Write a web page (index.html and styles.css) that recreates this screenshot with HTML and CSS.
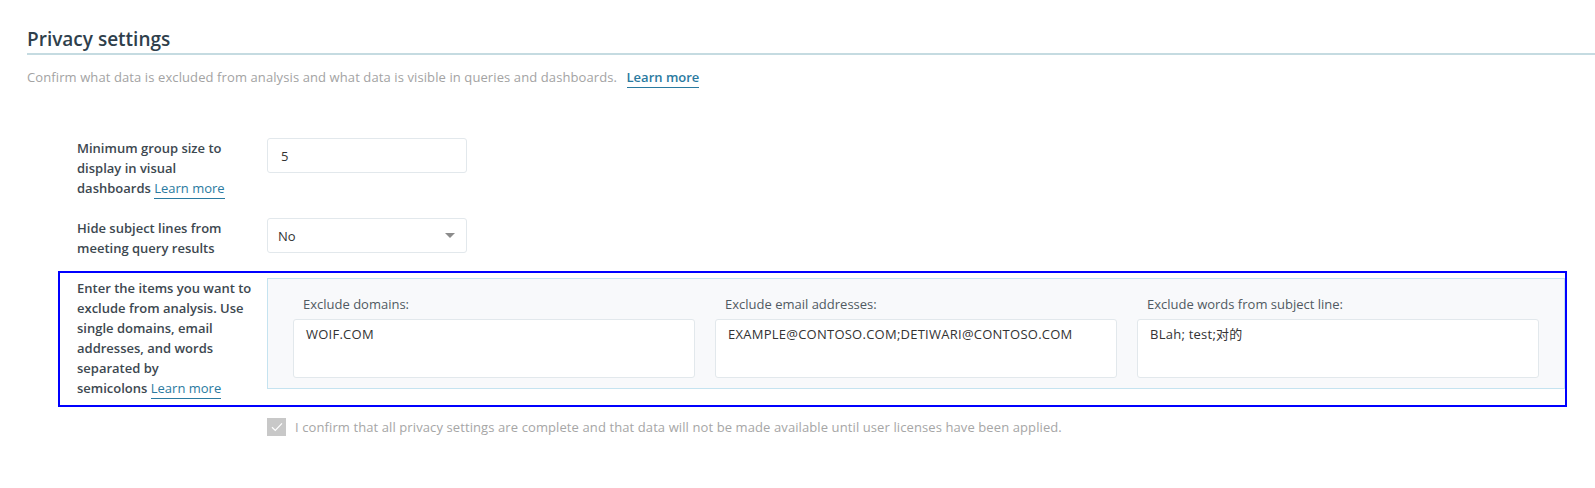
FILE: index.html
```html
<!DOCTYPE html>
<html lang="en">
<head>
<meta charset="utf-8">
<title>Privacy settings</title>
<link rel="stylesheet" href="styles.css">
</head>
<body>
<div class="page">
  <h1 class="title">Privacy settings</h1>
  <p class="subtitle">Confirm what data is excluded from analysis and what data is visible in queries and dashboards. <a class="link" href="#">Learn more</a></p>

  <div class="form">
    <div class="row row-one">
      <div class="label">Minimum group size to<br>display in visual<br>dashboards <a class="link" href="#">Learn more</a></div>
      <div class="input">5</div>
    </div>
    <div class="row row-two">
      <div class="label">Hide subject lines from<br>meeting query results</div>
      <div class="input select">No<span class="caret"></span></div>
    </div>
    <div class="row row-exclude">
      <div class="label">Enter the items you want to<br>exclude from analysis. Use<br>single domains, email<br>addresses, and words<br>separated by<br>semicolons <a class="link" href="#">Learn more</a></div>
      <div class="panel">
        <div class="field">
          <div class="field-label">Exclude domains:</div>
          <div class="area">WOIF.COM</div>
        </div>
        <div class="field">
          <div class="field-label">Exclude email addresses:</div>
          <div class="area">EXAMPLE@CONTOSO.COM;DETIWARI@CONTOSO.COM</div>
        </div>
        <div class="field">
          <div class="field-label">Exclude words from subject line:</div>
          <div class="area">BLah; test;对的</div>
        </div>
      </div>
    </div>
    <div class="confirm">
      <span class="check"><svg width="12" height="10" viewBox="0 0 12 10"><path d="M1 5.2 L4.3 8.4 L11 1.4" fill="none" stroke="#ffffff" stroke-width="1.2"/></svg></span>
      <span class="confirm-text">I confirm that all privacy settings are complete and that data will not be made available until user licenses have been applied.</span>
    </div>
  </div>
</div>
</body>
</html>
```

FILE: styles.css
```css
html, body {
  margin: 0;
  padding: 0;
  background: #ffffff;
}

body {
  font-family: "Open Sans", "Noto Sans CJK SC", sans-serif;
  font-size: 13px;
  color: #333333;
}

.page {
  padding: 25px 0 0 27px;
}

.title {
  margin: 0;
  font-size: 19px;
  font-weight: 600;
  line-height: 28px;
  color: #2f3f4c;
  border-bottom: 2px solid #c5dbe1;
}

.subtitle {
  margin: 12px 0 0;
  font-size: 13px;
  letter-spacing: 0.1px;
  line-height: 20px;
  color: #a3a3a3;
}

.link {
  color: #2a7aa0;
  text-decoration: none;
  border-bottom: 1px solid #2a7aa0;
  padding-bottom: 1px;
}

.subtitle .link {
  margin-left: 6px;
  font-weight: 600;
  letter-spacing: 0;
}

.form {
  margin-top: 51px;
  padding-right: 28px;
}

.row {
  display: grid;
  grid-template-columns: 180px 200px;
  column-gap: 10px;
  padding-left: 50px;
}

.row-one {
  margin-bottom: 20px;
}

.row-two {
  margin-bottom: 13px;
}

.label {
  font-size: 13px;
  font-weight: 600;
  line-height: 20px;
  color: #3d4850;
  white-space: nowrap;
}

.label .link {
  font-weight: 400;
}

.input {
  box-sizing: border-box;
  height: 35px;
  border: 1px solid #e2e8ec;
  border-radius: 3px;
  padding: 0 13px;
  display: flex;
  align-items: center;
  font-size: 13px;
  color: #333333;
  background: #ffffff;
}

.select {
  justify-content: space-between;
  padding-left: 10px;
}

.caret {
  width: 0;
  height: 0;
  border-left: 5px solid transparent;
  border-right: 5px solid transparent;
  border-top: 5px solid #8c8c8c;
  margin-right: -2px;
}

.row-exclude {
  grid-template-columns: 180px 1fr;
  margin-left: 31px;
  padding: 5px 0 7px 17px;
  border: 2px solid #0000ff;
}

.panel {
  border: 1px solid #c5e3f0;
  background: #f8f9fb;
  padding: 15px 25px 10px;
  display: grid;
  grid-template-columns: repeat(3, 1fr);
  column-gap: 20px;
  align-self: start;
}

.field-label {
  font-size: 13px;
  line-height: 20px;
  color: #505a62;
  margin-bottom: 5px;
  padding-left: 10px;
}

.area {
  box-sizing: border-box;
  height: 59px;
  background: #ffffff;
  border: 1px solid #e2e8ec;
  border-radius: 3px;
  padding: 4px 12px;
  font-size: 13px;
  letter-spacing: 0.25px;
  line-height: 20px;
  color: #333333;
}

.confirm {
  margin-top: 11px;
  padding-left: 240px;
  display: flex;
  align-items: center;
  gap: 9px;
}

.check {
  width: 19px;
  height: 18px;
  background: #c8c8c8;
  display: flex;
  align-items: center;
  justify-content: center;
}

.confirm-text {
  font-size: 13px;
  letter-spacing: 0.1px;
  color: #a6a6a6;
}
```
